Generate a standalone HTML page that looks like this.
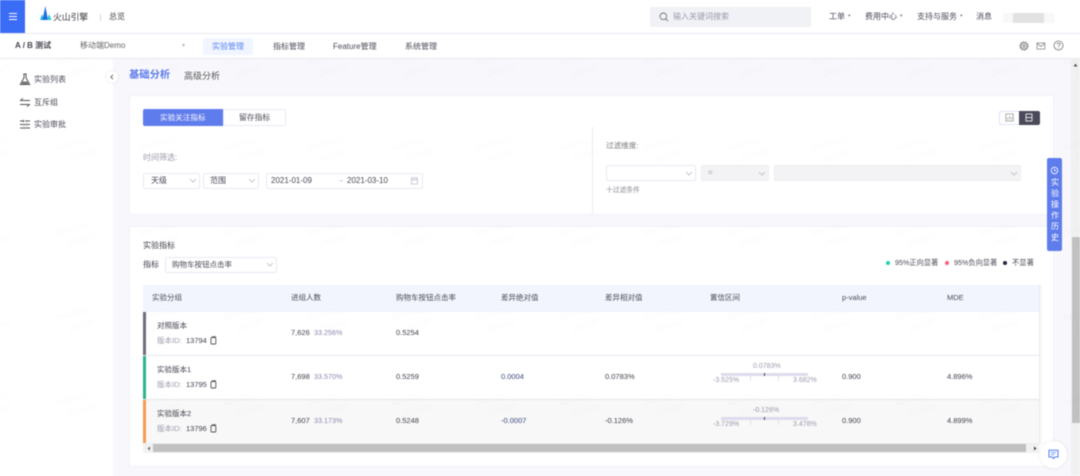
<!DOCTYPE html>
<html lang="zh-CN">
<head>
<meta charset="utf-8">
<title>A/B 测试</title>
<style>
html,body{margin:0;padding:0;width:1080px;height:476px;overflow:hidden;background:#fff}
#w{position:relative;width:1080px;height:476px;overflow:hidden;background:#f7f7fc;font-family:"Liberation Sans","Noto Sans CJK SC",sans-serif;color:#4a4a57;font-size:8px;filter:blur(.4px)}
#w div,#w svg{position:absolute}
.t{position:absolute;white-space:nowrap;line-height:12px;height:12px}
.b{box-sizing:border-box;border:1px solid #e9ebf5;border-radius:2px;background:#fff}
.g{background:#f3f3f5;border-color:#ececf0}
.m{color:#9a9aad}
.c{color:#3f3f4c}
.chev{fill:none;stroke:#b5b8c6;stroke-width:.8}
</style>
</head>
<body>
<div id="w">
  <!-- top bar -->
  <div style="left:0;top:0;width:1080px;height:33px;background:#fff;border-bottom:1px solid #e9e9ef"></div>
  <div style="left:0;top:0;width:25px;height:33px;background:#3a6cf6"></div>
  <div style="left:9px;top:13px;width:8px;height:1px;background:#fff"></div>
  <div style="left:9px;top:16px;width:8px;height:1px;background:#fff"></div>
  <div style="left:9px;top:19px;width:8px;height:1px;background:#fff"></div>
  <svg style="left:39px;top:6px" width="13" height="15" viewBox="0 0 13 15"><path d="M1 14L3 8 5 14Z" fill="#25b8e6"/><path d="M3.500 14L6.300 0 9 14Z" fill="#1c6de0"/><path d="M8 14L10 8 12.500 14Z" fill="#27c6d8"/></svg>
  <span class="t" style="left:53px;top:11px;font-size:8.800px;color:#33333d">火山引擎</span>
  <div style="left:100px;top:14px;width:1px;height:7px;background:#d5d5dc"></div>
  <span class="t" style="left:109px;top:11px;font-size:8px;color:#444">总览</span>

  <div style="left:650px;top:7px;width:161px;height:20px;background:#f1f2f5;border-radius:1px"></div>
  <svg style="left:659px;top:12px" width="10" height="10" viewBox="0 0 10 10"><circle cx="4.300" cy="4.300" r="3.300" fill="none" stroke="#70737f" stroke-width=".9"/><path d="M6.800 6.800L9 9" stroke="#70737f" stroke-width=".9"/></svg>
  <span class="t m" style="left:673px;top:11px;font-size:8px">输入关键词搜索</span>
  <span class="t" style="left:829px;top:11px;font-size:8px">工单</span>
  <span class="t" style="left:848px;top:10px;font-size:5px;color:#888">▾</span>
  <span class="t" style="left:865px;top:11px;font-size:8px">费用中心</span>
  <span class="t" style="left:900px;top:10px;font-size:5px;color:#888">▾</span>
  <span class="t" style="left:917px;top:11px;font-size:8px">支持与服务</span>
  <span class="t" style="left:960px;top:10px;font-size:5px;color:#888">▾</span>
  <span class="t" style="left:976px;top:11px;font-size:8px">消息</span>
  <div style="left:1003px;top:13px;width:52px;height:10px;background:#f8f8f8"></div>
  <div style="left:1013px;top:13px;width:31px;height:10px;background:#e2e2e2"></div>

  <!-- second nav -->
  <div style="left:0;top:34px;width:1080px;height:24px;background:#fff;border-bottom:1px solid #e9e9ef"></div>
  <span class="t" style="left:15px;top:40px;font-size:8px;font-weight:bold;color:#44444f">A / B 测试</span>
  <span class="t" style="left:80px;top:40px;font-size:8px;color:#666">移动端Demo</span>
  <span class="t" style="left:182px;top:40px;font-size:6px;color:#b5b5bd">▾</span>
  <div style="left:203px;top:38px;width:50px;height:17px;background:#f0f5ff;border-radius:2px"></div>
  <span class="t" style="left:212px;top:41px;font-size:8px;color:#5b82f0">实验管理</span>
  <span class="t" style="left:273px;top:41px;font-size:8px">指标管理</span>
  <span class="t" style="left:333px;top:41px;font-size:8px">Feature管理</span>
  <span class="t" style="left:405px;top:41px;font-size:8px">系统管理</span>
  <svg style="left:1019px;top:41px" width="10" height="10" viewBox="0 0 10 10"><circle cx="5" cy="5" r="3.300" fill="none" stroke="#777" stroke-width=".9"/><circle cx="5" cy="5" r="4.200" fill="none" stroke="#777" stroke-width="1" stroke-dasharray="1.300 1.350"/><circle cx="5" cy="5" r="1.300" fill="none" stroke="#777" stroke-width=".8"/></svg>
  <svg style="left:1036px;top:42px" width="10" height="8" viewBox="0 0 10 8"><rect x="1" y="1" width="7.800" height="6" fill="none" stroke="#888" stroke-width=".8"/><path d="M1 1.500L4.900 4.500 8.800 1.500" fill="none" stroke="#888" stroke-width=".8"/></svg>
  <svg style="left:1053px;top:40px" width="11" height="11" viewBox="0 0 11 11"><circle cx="5.500" cy="5.500" r="4.500" fill="none" stroke="#777" stroke-width=".8"/><path d="M4 4.300C4 2.600 7 2.600 7 4.300 7 5.300 5.500 5.300 5.500 6.600M5.500 7.500V8.400" fill="none" stroke="#777" stroke-width=".8"/></svg>

  <!-- sidebar -->
  <div style="left:0;top:59px;width:113px;height:417px;background:#fff"></div>
  <svg style="left:19px;top:73px" width="12" height="13" viewBox="0 0 12 13"><path d="M4.300 1H7.700M5 1V4.700L1.300 11.500H10.700L7 4.700V1" fill="none" stroke="#555" stroke-width="1"/><path d="M3 8.500H9V11H3Z" fill="#777"/></svg>
  <span class="t" style="left:34px;top:74px;font-size:8px">实验列表</span>
  <svg style="left:19px;top:97px" width="12" height="11" viewBox="0 0 12 11"><path d="M1 3.500H11M4 1.300L1.500 3.500M1 7.500H11M8 9.700L10.500 7.500" fill="none" stroke="#555" stroke-width=".9"/></svg>
  <span class="t" style="left:34px;top:97px;font-size:8px">互斥组</span>
  <svg style="left:19px;top:119px" width="12" height="11" viewBox="0 0 12 11"><path d="M1 2H4M6 2H11M1 5.500H7M9 5.500H11M1 9H4M6 9H11M4.500 .8V3.200M8 4.300V6.700M5 7.800V10.200" fill="none" stroke="#555" stroke-width=".9"/></svg>
  <span class="t" style="left:34px;top:119px;font-size:8px">实验审批</span>
  <div style="left:106px;top:71px;width:12px;height:12px;background:#fff;border-radius:50%;box-shadow:0 0 2px rgba(0,0,0,.12)"></div>
  <svg style="left:109px;top:74px" width="6" height="6" viewBox="0 0 6 6"><path d="M4 .8L1.800 3 4 5.200" fill="none" stroke="#666" stroke-width=".9"/></svg>

  <span class="t" style="left:129px;top:70px;font-size:10.300px;font-weight:bold;color:#5c7cea">基础分析</span>
  <span class="t" style="left:184px;top:70px;font-size:9px;color:#555">高级分析</span>

  <!-- card 1 -->
  <div style="left:130px;top:96px;width:923px;height:118px;background:#fff;box-shadow:0 0 0 1px #f1f1f8"></div>
  <div style="left:143px;top:109px;width:80px;height:17px;background:#5f7cec;border-radius:2px 0 0 2px"></div>
  <span class="t" style="left:160px;top:112px;font-size:7.600px;color:#fff">实验关注指标</span>
  <div class="b" style="left:223px;top:109px;width:63px;height:17px;border-radius:0 2px 2px 0"></div>
  <span class="t" style="left:239px;top:112px;font-size:7.800px">留存指标</span>
  <div class="b" style="left:999px;top:111px;width:21px;height:14px;border-radius:2px 0 0 2px;border-color:#dfe3f5"></div>
  <svg style="left:1005px;top:113px" width="9" height="9" viewBox="0 0 9 9"><rect x=".8" y="1" width="7.400" height="7" fill="none" stroke="#999" stroke-width=".8"/><path d="M2.500 6.500V4.500M4.500 6.500V3M6.500 6.500V4" stroke="#999" stroke-width=".8"/></svg>
  <div style="left:1019px;top:111px;width:21px;height:14px;background:#4a4a5a;border-radius:0 2px 2px 0"></div>
  <svg style="left:1025px;top:113px" width="8" height="9" viewBox="0 0 8 9"><rect x="1" y="1" width="6" height="7" fill="none" stroke="#fff" stroke-width=".8"/><path d="M1 4.500H7" stroke="#fff" stroke-width=".8"/></svg>
  <div style="left:592px;top:127px;width:1px;height:87px;background:#ececf2"></div>

  <span class="t m" style="left:143px;top:152px;font-size:8px">时间筛选:</span>
  <div class="b" style="left:143px;top:173px;width:57px;height:16px"></div>
  <span class="t" style="left:151px;top:175px;font-size:8px">天级</span>
  <svg style="left:189px;top:178px" width="8" height="6"><path class="chev" d="M1 1L4 4 7 1"/></svg>
  <div class="b" style="left:203px;top:173px;width:56px;height:16px"></div>
  <span class="t" style="left:210px;top:175px;font-size:8px">范围</span>
  <svg style="left:248px;top:178px" width="8" height="6"><path class="chev" d="M1 1L4 4 7 1"/></svg>
  <div class="b" style="left:266px;top:173px;width:157px;height:16px"></div>
  <span class="t" style="left:271px;top:175px;font-size:8px">2021-01-09</span>
  <span class="t m" style="left:337px;top:175px;font-size:7px">→</span>
  <span class="t" style="left:347px;top:175px;font-size:8px">2021-03-10</span>
  <svg style="left:410px;top:176px" width="9" height="9" viewBox="0 0 9 9"><rect x="1.500" y="2" width="6" height="6" fill="none" stroke="#c0c0cc" stroke-width=".8"/><path d="M1.500 3.800H7.500M3 1V2.500M6 1V2.500" stroke="#c0c0cc" stroke-width=".8"/></svg>

  <span class="t m" style="left:606px;top:140px;font-size:7.600px;color:#777">过滤维度:</span>
  <div class="b" style="left:606px;top:165px;width:90px;height:16px"></div>
  <svg style="left:685px;top:171px" width="8" height="6"><path class="chev" d="M1 1L4 4 7 1"/></svg>
  <div class="b g" style="left:701px;top:165px;width:68px;height:16px"></div>
  <span class="t m" style="left:708px;top:167px;font-size:8px">=</span>
  <svg style="left:758px;top:171px" width="8" height="6"><path class="chev" d="M1 1L4 4 7 1"/></svg>
  <div class="b g" style="left:774px;top:165px;width:247px;height:16px"></div>
  <svg style="left:1010px;top:171px" width="8" height="6"><path class="chev" d="M1 1L4 4 7 1"/></svg>
  <span class="t" style="left:606px;top:185px;font-size:6.800px;color:#8a8a95">十过滤条件</span>

  <!-- card 2 -->
  <div style="left:130px;top:227px;width:923px;height:239px;background:#fff;box-shadow:0 0 0 1px #f1f1f8"></div>
  <span class="t c" style="left:143px;top:240px;font-size:8px">实验指标</span>
  <span class="t c" style="left:143px;top:259px;font-size:8px">指标</span>
  <div class="b" style="left:165px;top:257px;width:112px;height:16px"></div>
  <span class="t" style="left:172px;top:259px;font-size:7.500px">购物车按钮点击率</span>
  <svg style="left:266px;top:262px" width="8" height="6"><path class="chev" d="M1 1L4 4 7 1"/></svg>

  <div style="left:886px;top:261px;width:4px;height:4px;border-radius:50%;background:#1fcfb2"></div>
  <span class="t" style="left:895px;top:257px;font-size:7.200px">95%正向显著</span>
  <div style="left:945px;top:261px;width:4px;height:4px;border-radius:50%;background:#f25c78"></div>
  <span class="t" style="left:954px;top:257px;font-size:7.200px">95%负向显著</span>
  <div style="left:1003px;top:261px;width:4px;height:4px;border-radius:50%;background:#24243a"></div>
  <span class="t" style="left:1012px;top:257px;font-size:7.300px">不显著</span>

  <!-- table -->
  <div style="left:143px;top:285px;width:896px;height:27px;background:#f2f5fe"></div>
  <div style="left:143px;top:312px;width:896px;height:43px;background:#fff;border-bottom:1px solid #e9e9ef"></div>
  <div style="left:143px;top:356px;width:896px;height:43px;background:#fff;border-bottom:1px solid #e6e6ea"></div>
  <div style="left:143px;top:400px;width:896px;height:43px;background:#f8f8f8;border-bottom:1px solid #eee"></div>
  <div style="left:143px;top:312px;width:3px;height:43px;background:#6e6e7c"></div>
  <div style="left:143px;top:356px;width:3px;height:43px;background:#2bb38c"></div>
  <div style="left:143px;top:400px;width:3px;height:43px;background:#f59b50"></div>
  <div style="left:1039px;top:285px;width:3px;height:159px;background:linear-gradient(90deg,#e8e8ec,#fff)"></div>

  <span class="t" style="left:152px;top:292px;font-size:7.500px">实验分组</span>
  <span class="t" style="left:291px;top:292px;font-size:7.500px">进组人数</span>
  <span class="t" style="left:396px;top:292px;font-size:7.500px">购物车按钮点击率</span>
  <span class="t" style="left:501px;top:292px;font-size:7.500px">差异绝对值</span>
  <span class="t" style="left:605px;top:292px;font-size:7.500px">差异相对值</span>
  <span class="t" style="left:710px;top:292px;font-size:7.500px">置信区间</span>
  <span class="t" style="left:842px;top:292px;font-size:7.500px">p-value</span>
  <span class="t" style="left:947px;top:292px;font-size:7.500px">MDE</span>

  <!-- row 1 -->
  <span class="t c" style="left:157px;top:320px;font-size:7.500px">对照版本</span>
  <span class="t m" style="left:157px;top:335px;font-size:7.500px">版本ID:</span>
  <span class="t c" style="left:186px;top:335px;font-size:7.500px">13794</span>
  <svg style="left:210px;top:336px" width="7" height="9" viewBox="0 0 7 9"><rect x="1" y="1.500" width="4.800" height="6.500" rx=".8" fill="none" stroke="#555" stroke-width=".9"/><path d="M2 .7H6" stroke="#555" stroke-width=".8"/></svg>
  <span class="t c" style="left:291px;top:327px;font-size:7.500px">7,626</span>
  <span class="t" style="left:314px;top:327px;font-size:7.200px;color:#8a87ad">33.256%</span>
  <span class="t c" style="left:396px;top:327px;font-size:7.500px">0.5254</span>

  <!-- row 2 -->
  <span class="t c" style="left:157px;top:364px;font-size:7.500px">实验版本1</span>
  <span class="t m" style="left:157px;top:379px;font-size:7.500px">版本ID:</span>
  <span class="t c" style="left:186px;top:379px;font-size:7.500px">13795</span>
  <svg style="left:210px;top:380px" width="7" height="9" viewBox="0 0 7 9"><rect x="1" y="1.500" width="4.800" height="6.500" rx=".8" fill="none" stroke="#555" stroke-width=".9"/><path d="M2 .7H6" stroke="#555" stroke-width=".8"/></svg>
  <span class="t c" style="left:291px;top:371px;font-size:7.500px">7,698</span>
  <span class="t" style="left:314px;top:371px;font-size:7.200px;color:#8a87ad">33.570%</span>
  <span class="t c" style="left:396px;top:371px;font-size:7.500px">0.5259</span>
  <span class="t" style="left:501px;top:371px;font-size:7.500px;color:#3b4a7a">0.0004</span>
  <span class="t c" style="left:605px;top:371px;font-size:7.500px">0.0783%</span>
  <span class="t m" style="left:753px;top:361px;font-size:7px">0.0783%</span>
  <div style="left:721px;top:373px;width:87px;height:3px;background:#dcdcec"></div>
  <div style="left:764px;top:373px;width:1px;height:3px;background:#444"></div>
  <div style="left:750px;top:376px;width:1px;height:5px;background:#e0e0ea"></div>
  <div style="left:778px;top:376px;width:1px;height:5px;background:#e0e0ea"></div>
  <span class="t m" style="left:713px;top:375px;font-size:7px">-3.525%</span>
  <span class="t m" style="left:793px;top:375px;font-size:7px">3.682%</span>
  <span class="t c" style="left:842px;top:371px;font-size:7.500px">0.900</span>
  <span class="t c" style="left:947px;top:371px;font-size:7.500px">4.896%</span>

  <!-- row 3 -->
  <span class="t c" style="left:157px;top:408px;font-size:7.500px">实验版本2</span>
  <span class="t m" style="left:157px;top:423px;font-size:7.500px">版本ID:</span>
  <span class="t c" style="left:186px;top:423px;font-size:7.500px">13796</span>
  <svg style="left:210px;top:424px" width="7" height="9" viewBox="0 0 7 9"><rect x="1" y="1.500" width="4.800" height="6.500" rx=".8" fill="none" stroke="#555" stroke-width=".9"/><path d="M2 .7H6" stroke="#555" stroke-width=".8"/></svg>
  <span class="t c" style="left:291px;top:415px;font-size:7.500px">7,607</span>
  <span class="t" style="left:314px;top:415px;font-size:7.200px;color:#8a87ad">33.173%</span>
  <span class="t c" style="left:396px;top:415px;font-size:7.500px">0.5248</span>
  <span class="t" style="left:501px;top:415px;font-size:7.500px;color:#3b4a7a">-0.0007</span>
  <span class="t c" style="left:605px;top:415px;font-size:7.500px">-0.126%</span>
  <span class="t m" style="left:753px;top:405px;font-size:7px">-0.126%</span>
  <div style="left:721px;top:417px;width:87px;height:3px;background:#dcdcec"></div>
  <div style="left:764px;top:417px;width:1px;height:3px;background:#444"></div>
  <div style="left:750px;top:420px;width:1px;height:5px;background:#e0e0ea"></div>
  <div style="left:778px;top:420px;width:1px;height:5px;background:#e0e0ea"></div>
  <span class="t m" style="left:713px;top:419px;font-size:7px">-3.729%</span>
  <span class="t m" style="left:793px;top:419px;font-size:7px">3.478%</span>
  <span class="t c" style="left:842px;top:415px;font-size:7.500px">0.900</span>
  <span class="t c" style="left:947px;top:415px;font-size:7.500px">4.899%</span>

  <!-- horizontal scrollbar -->
  <div style="left:143px;top:444px;width:896px;height:9px;background:#f1f1f1"></div>
  <div style="left:153px;top:444px;width:873px;height:8px;background:#c1c1c1"></div>
  <svg style="left:147px;top:446px" width="4" height="5"><path d="M3 .5V4.500L.5 2.500Z" fill="#666"/></svg>
  <svg style="left:1033px;top:446px" width="4" height="5"><path d="M1 .5V4.500L3.500 2.500Z" fill="#444"/></svg>

  <!-- vertical scrollbar -->
  <div style="left:1071px;top:59px;width:9px;height:417px;background:#f1f1f1"></div>
  <div style="left:1072px;top:237px;width:8px;height:186px;background:#c1c1c1"></div>
  <svg style="left:1073px;top:63px" width="5" height="4"><path d="M.5 3.500H4.500L2.500 .5Z" fill="#555"/></svg>

  <!-- history tab -->
  <div style="left:1047px;top:158px;width:15px;height:93px;background:#5f7cec;border-radius:2px"></div>
  <svg style="left:1050px;top:166px" width="9" height="9" viewBox="0 0 9 9"><circle cx="4.500" cy="4.500" r="3.300" fill="none" stroke="#fff" stroke-width=".8"/><path d="M4.500 2.700V4.700H6.200" fill="none" stroke="#fff" stroke-width=".8"/></svg>
  <span class="t" style="left:1051px;top:177px;font-size:8px;color:#fff">实</span>
  <span class="t" style="left:1051px;top:188px;font-size:8px;color:#fff">验</span>
  <span class="t" style="left:1051px;top:199px;font-size:8px;color:#fff">操</span>
  <span class="t" style="left:1051px;top:210px;font-size:8px;color:#fff">作</span>
  <span class="t" style="left:1051px;top:221px;font-size:8px;color:#fff">历</span>
  <span class="t" style="left:1051px;top:232px;font-size:8px;color:#fff">史</span>

  <!-- chat button -->
  <div style="left:1040px;top:441px;width:27px;height:27px;background:#fff;border-radius:50%;box-shadow:0 0 4px rgba(0,0,0,.08)"></div>
  <svg style="left:1048px;top:449px" width="11" height="11" viewBox="0 0 11 11"><path d="M1 1.200H10V8H6.800L5.500 9.600 4.200 8H1Z" fill="none" stroke="#4f7df0" stroke-width="1"/><path d="M3 3.600H8M3 5.600H6.500" stroke="#4f7df0" stroke-width=".8"/></svg>

  <!-- watermark -->
  <svg style="left:0;top:0;pointer-events:none" width="1080" height="476">
    <defs>
      <pattern id="wm" x="56" y="53" width="84" height="85" patternUnits="userSpaceOnUse">
        <g transform="rotate(-15 10 10)" font-family="Liberation Sans, sans-serif" font-size="9" fill="#000" fill-opacity=".016">
          <text x="0" y="10">bach322</text>
          <text x="8" y="24">243447</text>
        </g>
      </pattern>
    </defs>
    <rect x="0" y="58" width="1080" height="418" fill="url(#wm)"/>
  </svg>
</div>
</body>
</html>
